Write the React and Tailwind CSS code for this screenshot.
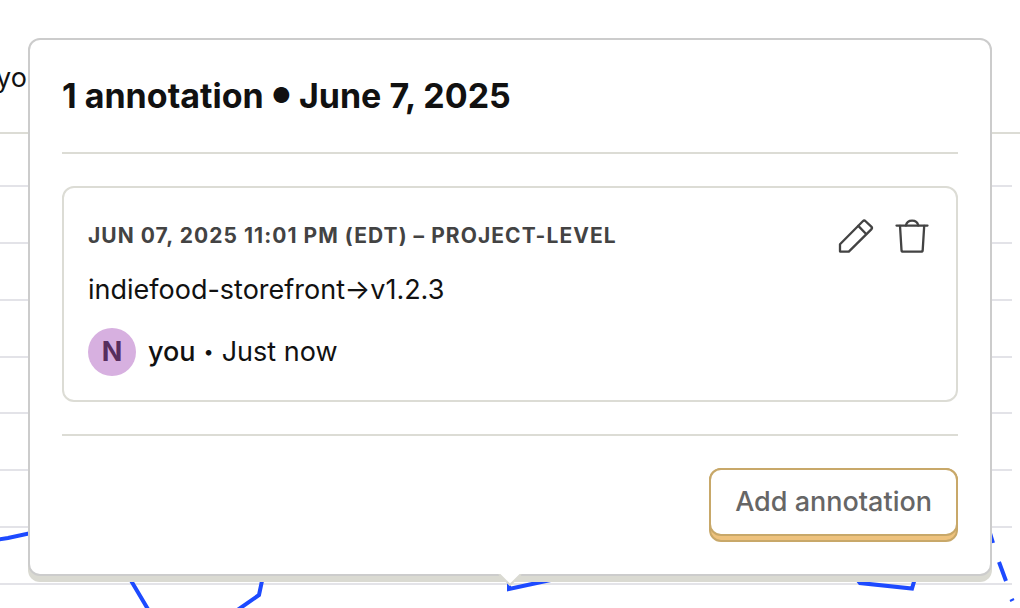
import React from "react";

const gridLines = [186, 243, 300, 357, 413, 470, 527, 584];

const PencilIcon = () => (
  <svg
    viewBox="0 0 40 40"
    className="w-10 h-10"
    fill="none"
    stroke="currentColor"
    strokeWidth="2.300"
    strokeLinejoin="round"
    strokeLinecap="round"
    aria-hidden="true"
  >
    <path d="M4 28.200 26.800 5.200a2 2 0 0 1 2.800 0l5.700 5.400a2 2 0 0 1 0 2.800L12.800 35.600H4z" />
    <path d="m22.300 9.900 7.600 7.800" />
  </svg>
);

const TrashIcon = () => (
  <svg
    viewBox="0 0 40 40"
    className="w-10 h-10"
    fill="none"
    stroke="currentColor"
    strokeWidth="2.300"
    strokeLinejoin="round"
    strokeLinecap="round"
    aria-hidden="true"
  >
    <path d="M4.500 9.600h31" />
    <path d="M13.900 9.400c.6-2.800 3-4.700 6.200-4.700s5.600 1.900 6.200 4.700" />
    <path d="m8 9.800 1.500 24.300a1.600 1.600 0 0 0 1.600 1.500h18a1.600 1.600 0 0 0 1.600-1.500L32.200 9.800" />
  </svg>
);

const Chart = () => (
  <svg viewBox="0 134 1020 474" className="block w-full" aria-hidden="true">
    <g stroke="#e3e3e8" strokeWidth="2">
      {gridLines.map((y) => (
        <line key={y} x1="0" x2="1012" y1={y} y2={y} />
      ))}
    </g>
    <g fill="none" stroke="#1d4aff" strokeWidth="4">
      <path d="M-2 539.500 8 538 40 531 120 562 152 616" />
      <path d="M226 618 259 595 266 562" />
      <path d="M509 570v19L560 578" />
      <path d="M850 570 860 583 912 588.500 918 568" />
      <path d="M987 523 993 543M999 562l7 19" />
      <path d="M1010 601l4-2" strokeWidth="2" />
    </g>
  </svg>
);

const AnnotationCard = () => (
  <article className="rounded-xl border-2 border-[#dcdcd5] p-6">
    <div className="flex h-12 items-center justify-between">
      <h3 className="text-[21px] font-bold uppercase tracking-wider text-[#434343]">
        Jun 07, 2025 11:01 PM (EDT) – Project-level
      </h3>
      <div className="flex gap-4 text-[#434343]">
        <button type="button" aria-label="Edit annotation">
          <PencilIcon />
        </button>
        <button type="button" aria-label="Delete annotation">
          <TrashIcon />
        </button>
      </div>
    </div>

    <p className="mt-3 mb-5 text-[27px] leading-9">
      indiefood-storefront→v1.2.3
    </p>

    {/* Author */}
    <div className="flex items-center gap-3 text-[27px]">
      <span className="flex h-12 w-12 items-center justify-center rounded-full bg-[#d7b0e0] font-bold text-[#572e5e]">
        N
      </span>
      <p className="flex items-center gap-2 leading-9">
        <span className="font-medium">you</span>
        <span className="text-[18px]">•</span>
        <span>Just now</span>
      </p>
    </div>
  </article>
);

const App = () => {
  return (
    <div className="relative min-h-screen overflow-hidden bg-white font-['Inter',sans-serif] text-[#111]">
      {/* Page behind the popover */}
      <header className="flex h-[134px] items-center border-b-2 border-[#dcdcd5] pt-6">
        <span className="-ml-1 text-[27px]">you</span>
      </header>
      <Chart />

      {/* Annotations popover */}
      <div
        role="dialog"
        aria-labelledby="popover-title"
        className="absolute inset-x-7 top-[38px] rounded-xl border-2 border-[#cccccc] bg-white p-8 shadow-[0_6px_0_#dadad2]"
      >
        <h2
          id="popover-title"
          className="flex items-center gap-2 text-[34px] font-bold leading-[48px]"
        >
          <span>1 annotation</span>
          <span className="text-[21px]">●</span>
          <span>June 7, 2025</span>
        </h2>
        <hr className="my-8 border-t-2 border-[#dcdcd5]" />
        <AnnotationCard />
        <hr className="my-8 border-t-2 border-[#dcdcd5]" />
        <div className="flex justify-end">
          <button
            type="button"
            className="rounded-xl border-2 border-[#c8a869] bg-[#eec27d] text-[27px] font-medium text-[#666]"
          >
            <span className="-mx-0.5 -mt-0.5 mb-1 block rounded-xl border-2 border-[#c8a869] bg-white px-6 py-3 leading-10">
              Add annotation
            </span>
          </button>
        </div>

        <svg
          viewBox="0 0 24 12"
          className="absolute top-full left-1/2 h-3 w-6 -translate-x-1/2"
          aria-hidden="true"
        >
          <path d="M1 0 12 11 23 0" fill="#fff" stroke="#dadad2" strokeWidth="2" />
        </svg>
      </div>
    </div>
  );
};

export default App;
